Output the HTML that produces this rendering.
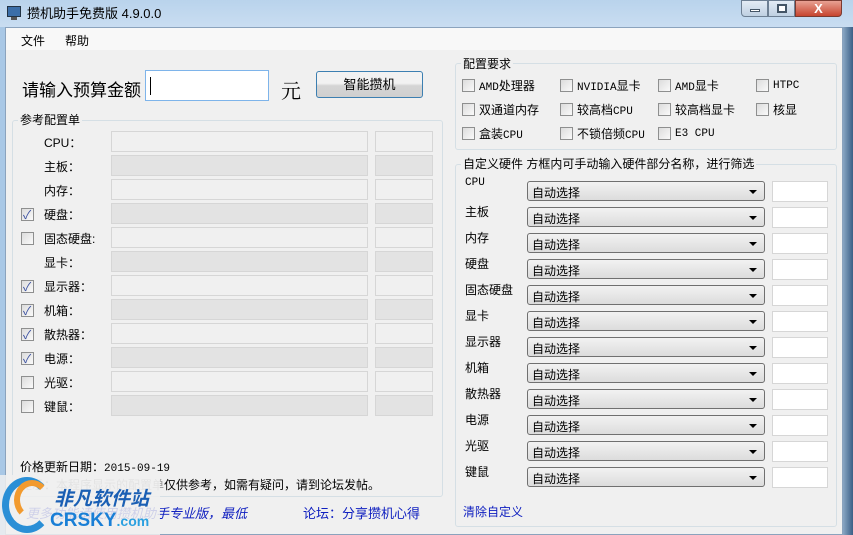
<!DOCTYPE html>
<html><head><meta charset="utf-8"><style>
*{margin:0;padding:0;box-sizing:border-box}
body{width:853px;height:535px;overflow:hidden;position:relative;background:#a9c8e6;font-family:"Liberation Sans","Noto Sans CJK SC",sans-serif;font-size:12px;color:#000}
.abs{position:absolute}
.title{left:0;top:0;width:853px;height:27px;background:linear-gradient(#b9d3ec,#c9ddf1)}
.client{left:5px;top:27px;width:838px;height:508px;background:#f0f0f0;border:1px solid #8ba3bd}
.menu{left:6px;top:28px;width:836px;height:22px;background:#f8f8f8}
.grp{position:absolute;border:1px solid #d5dfe5;border-radius:3px}
.gl{position:absolute;background:#f0f0f0;padding:0 2px;font-size:12px}
.fld{position:absolute;height:21px;border:1px solid #d6d6d6;background:#f0f0f0}
.fld.d{background:#e3e3e3}
.cb{position:absolute;width:13px;height:13px;border:1px solid #8e8f8f;background:linear-gradient(135deg,#dcdcdc,#fafafa)}
.cb.on::after{content:"✓";position:absolute;left:1px;top:-3px;font-size:12px;color:#3a50a0}
.lbl{position:absolute;font-size:12px}
.mono{font-family:"Liberation Mono","Noto Sans CJK SC",monospace;font-size:11px}
.combo{position:absolute;left:527px;width:238px;height:20px;border:1px solid #707070;border-radius:3px;background:linear-gradient(#f2f2f2,#dcdcdc);padding:2px 4px}
.combo::after{content:"";position:absolute;right:7px;top:8px;border-left:4px solid transparent;border-right:4px solid transparent;border-top:4px solid #000}
.tb{position:absolute;left:772px;width:56px;height:21px;background:#fff;border:1px solid #d6d6d6}
</style></head><body>
<div class="abs title"></div>
<div class="abs" style="left:7px;top:6px;width:14px;height:11px;background:#3b6ea8;border:1px solid #234"></div>
<div class="abs" style="left:11px;top:17px;width:6px;height:3px;background:#555"></div>
<div class="abs" style="left:27px;top:3px;font-size:13px">攒机助手免费版 4.9.0.0</div>
<div class="abs" style="left:741px;top:0;width:27px;height:17px;border:1px solid #6d7f93;border-radius:0 0 0 4px;background:linear-gradient(#e3ecf5,#bfd0e2)"><div class="abs" style="left:8px;top:8px;width:10px;height:3px;background:#fff;border:1px solid #456"></div></div>
<div class="abs" style="left:768px;top:0;width:27px;height:17px;border:1px solid #6d7f93;background:linear-gradient(#e3ecf5,#bfd0e2)"><div class="abs" style="left:8px;top:3px;width:10px;height:9px;border:2px solid #456;background:#fff"></div></div>
<div class="abs" style="left:795px;top:0;width:47px;height:17px;border:1px solid #7a3a30;border-radius:0 0 4px 0;background:linear-gradient(#e8a193,#c7452f);color:#fff;font-weight:bold;text-align:center;font-size:13px;line-height:15px">X</div>
<div class="abs" style="left:843px;top:27px;width:10px;height:508px;background:linear-gradient(90deg,#8aa7c4,#3b5f86)"></div>
<div class="abs client"></div>
<div class="abs menu"></div>
<div class="abs" style="left:21px;top:32px">文件</div>
<div class="abs" style="left:65px;top:32px">帮助</div>

<div class="abs" style="left:22px;top:76px;font-size:17px">请输入预算金额</div>
<div class="abs" style="left:145px;top:70px;width:124px;height:31px;background:#fff;border:1px solid #7eb4ea"><div class="abs" style="left:4px;top:6px;width:1px;height:18px;background:#000"></div></div>
<div class="abs" style="left:281px;top:75px;font-size:20px;font-family:'Noto Serif CJK SC',serif">元</div>
<div class="abs" style="left:316px;top:71px;width:107px;height:27px;border:1px solid #3c7fb1;border-radius:3px;background:linear-gradient(#f2f2f2 45%,#d5d5d5 55%,#cfcfcf);text-align:center;line-height:25px;font-size:13px">智能攒机</div>

<div class="grp" style="left:12px;top:120px;width:431px;height:377px"></div>
<div class="gl" style="left:18px;top:111px">参考配置单</div>

<div id="left"></div>

<div class="abs" style="left:20px;top:458px">价格更新日期：<span class="mono">2015-09-19</span></div>
<div class="abs" style="left:20px;top:476px;color:#999">提示：本程序显示的配置单<span style="color:#000">仅供参考，如需有疑问，请到论坛发帖。</span></div>
<div class="abs" style="left:26px;top:503px;color:#1020c0;font-style:italic;font-size:13px">更多功能请使用攒机助手专业版，最低</div>
<div class="abs" style="left:303px;top:503px;color:#1020c0;font-size:13px">论坛：分享攒机心得</div>
<div class="abs" style="left:0;top:475px;width:160px;height:60px;background:rgba(240,240,240,.85)"></div>
<div class="abs" style="left:2px;top:477px;width:50px;height:56px;border-radius:50%;border:7px solid #2a8fd6;border-right-color:transparent"></div>
<div class="abs" style="left:14px;top:480px;width:36px;height:40px;border-radius:50%;border:6px solid #f29a2e;border-right-color:transparent;border-bottom-color:transparent"></div>
<div class="abs" style="left:54px;top:484px;font-size:19px;font-weight:bold;color:#1a5fb4;font-style:italic">非凡软件站</div>
<div class="abs" style="left:50px;top:510px;font-size:19px;font-weight:bold;color:#1a7fd6">CRSKY<span style="font-size:14px;color:#2aa0e0">.com</span></div>

<div class="grp" style="left:455px;top:63px;width:382px;height:87px"></div>
<div class="gl" style="left:461px;top:55px">配置要求</div>
<div id="req"></div>

<div class="grp" style="left:455px;top:164px;width:382px;height:363px"></div>
<div class="gl" style="left:461px;top:155px">自定义硬件 方框内可手动输入硬件部分名称，进行筛选</div>
<div id="cust"></div>
<div class="abs" style="left:463px;top:503px;color:#1020c0">清除自定义</div>

<script>
var L=[["CPU：",0,0],["主板：",0,0],["内存：",0,0],["硬盘：",1,1],["固态硬盘:",1,0],["显卡：",0,0],["显示器：",1,1],["机箱：",1,1],["散热器：",1,1],["电源：",1,1],["光驱：",1,0],["键鼠：",1,0]];
var h="";L.forEach(function(r,i){var y=131+i*24;
if(r[1])h+='<div class="cb'+(r[2]?' on':'')+'" style="left:21px;top:'+(y+5)+'px"></div>';
h+='<div class="lbl" style="left:44px;top:'+(y+3)+'px">'+r[0]+'</div>';
var d=(i%2==1)?' d':'';
h+='<div class="fld'+d+'" style="left:111px;top:'+y+'px;width:257px"></div><div class="fld'+d+'" style="left:375px;top:'+y+'px;width:58px"></div>';});
document.getElementById("left").innerHTML=h;
var R=[["AMD处理器","NVIDIA显卡","AMD显卡","HTPC"],["双通道内存","较高档CPU","较高档显卡","核显"],["盒装CPU","不锁倍频CPU","E3 CPU"]];
h="";var xs=[462,560,658,756];R.forEach(function(row,j){row.forEach(function(t,k){var y=79+j*24;
h+='<div class="cb" style="left:'+xs[k]+'px;top:'+y+'px"></div><div class="lbl" style="left:'+(xs[k]+17)+'px;top:'+(y-2)+'px">'+t.replace(/([A-Z0-9 ]+)/g,'<span class="mono">$1</span>')+'</div>';});});
document.getElementById("req").innerHTML=h;
var C=["CPU","主板","内存","硬盘","固态硬盘","显卡","显示器","机箱","散热器","电源","光驱","键鼠"];
h="";C.forEach(function(t,i){var y=181+i*26;
h+='<div class="lbl'+(i==0?' mono':'')+'" style="left:465px;top:'+(y-4)+'px">'+t+'</div><div class="combo" style="top:'+y+'px">自动选择</div><div class="tb" style="top:'+y+'px"></div>';});
document.getElementById("cust").innerHTML=h;
</script>
</body></html>
